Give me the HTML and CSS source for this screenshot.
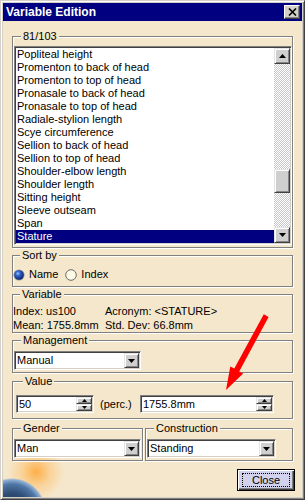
FILE: index.html
```html
<!DOCTYPE html>
<html>
<head>
<meta charset="utf-8">
<link rel="stylesheet" href="styles.css">
</head>
<body>
<div class="window">
  <div class="titlebar">
    <span class="title">Variable Edition</span>
    <span class="tb-close"><svg width="9" height="8" viewBox="0 0 9 8"><path d="M1 0.5 L8 7.5 M8 0.5 L1 7.5" stroke="#000" stroke-width="1.6"/></svg></span>
  </div>
  <div class="client">
    <fieldset class="grp grp-list">
      <legend>81/103</legend>
      <div class="listbox">
        <ul class="items">
          <li>Popliteal height</li>
          <li>Promenton to back of head</li>
          <li>Promenton to top of head</li>
          <li>Pronasale to back of head</li>
          <li>Pronasale to top of head</li>
          <li>Radiale-stylion length</li>
          <li>Scye circumference</li>
          <li>Sellion to back of head</li>
          <li>Sellion to top of head</li>
          <li>Shoulder-elbow length</li>
          <li>Shoulder length</li>
          <li>Sitting height</li>
          <li>Sleeve outseam</li>
          <li>Span</li>
          <li class="sel">Stature</li>
        </ul>
        <div class="vscroll">
          <div class="sbtn"><svg width="7" height="4" viewBox="0 0 7 4"><path d="M3.5 0 L7 4 L0 4 Z" fill="#000"/></svg></div>
          <div class="track"><div class="thumb"></div></div>
          <div class="sbtn"><svg width="7" height="4" viewBox="0 0 7 4"><path d="M0 0 L7 0 L3.5 4 Z" fill="#000"/></svg></div>
        </div>
      </div>
    </fieldset>

    <fieldset class="grp grp-sort">
      <legend>Sort by</legend>
      <div class="radios">
        <label class="radio">
          <svg width="12" height="12" viewBox="0 0 12 12">
            <defs>
              <radialGradient id="rb" cx="0.38" cy="0.35" r="0.7">
                <stop offset="0" stop-color="#9fc4ff"/>
                <stop offset="0.35" stop-color="#2f62c8"/>
                <stop offset="1" stop-color="#0a1f66"/>
              </radialGradient>
            </defs>
            <circle cx="6" cy="6" r="5.6" fill="#9a9a9a"/>
            <circle cx="6" cy="6" r="4.8" fill="url(#rb)"/>
          </svg>
          <span>Name</span>
        </label>
        <label class="radio">
          <svg width="12" height="12" viewBox="0 0 12 12">
            <circle cx="6" cy="6" r="5.3" fill="#fdfbe8" stroke="#6a6a6a" stroke-width="1"/>
          </svg>
          <span>Index</span>
        </label>
      </div>
    </fieldset>

    <fieldset class="grp grp-var">
      <legend>Variable</legend>
      <div class="vargrid">
        <span>Index: us100</span><span>Acronym: &lt;STATURE&gt;</span>
        <span>Mean: 1755.8mm</span><span>Std. Dev: 66.8mm</span>
      </div>
    </fieldset>

    <fieldset class="grp grp-mgmt">
      <legend>Management</legend>
      <div class="combo combo-mgmt">
        <span class="combo-text">Manual</span>
        <span class="combo-btn"><svg width="7" height="4" viewBox="0 0 7 4"><path d="M0 0 L7 0 L3.5 4 Z" fill="#000"/></svg></span>
      </div>
    </fieldset>

    <fieldset class="grp grp-value">
      <legend>Value</legend>
      <div class="value-row">
        <div class="spin spin-perc">
          <span class="spin-text">50</span>
          <span class="spin-btns">
            <span class="spin-btn"><svg width="7" height="4" viewBox="0 0 7 4"><path d="M3.5 0 L7 4 L0 4 Z" fill="#000"/></svg></span>
            <span class="spin-btn"><svg width="7" height="4" viewBox="0 0 7 4"><path d="M0 0 L7 0 L3.5 4 Z" fill="#000"/></svg></span>
          </span>
        </div>
        <span class="perc">(perc.)</span>
        <div class="spin spin-val">
          <span class="spin-text">1755.8mm</span>
          <span class="spin-btns">
            <span class="spin-btn"><svg width="7" height="4" viewBox="0 0 7 4"><path d="M3.5 0 L7 4 L0 4 Z" fill="#000"/></svg></span>
            <span class="spin-btn"><svg width="7" height="4" viewBox="0 0 7 4"><path d="M0 0 L7 0 L3.5 4 Z" fill="#000"/></svg></span>
          </span>
        </div>
      </div>
    </fieldset>

    <div class="row2">
      <fieldset class="grp grp-gender">
        <legend>Gender</legend>
        <div class="combo combo-gender">
          <span class="combo-text">Man</span>
          <span class="combo-btn"><svg width="7" height="4" viewBox="0 0 7 4"><path d="M0 0 L7 0 L3.5 4 Z" fill="#000"/></svg></span>
        </div>
      </fieldset>
      <fieldset class="grp grp-constr">
        <legend>Construction</legend>
        <div class="combo combo-constr">
          <span class="combo-text">Standing</span>
          <span class="combo-btn"><svg width="7" height="4" viewBox="0 0 7 4"><path d="M0 0 L7 0 L3.5 4 Z" fill="#000"/></svg></span>
        </div>
      </fieldset>
    </div>

    <div class="footer">
      <button class="close-btn"><span class="focus">Close</span></button>
    </div>

    <svg class="arrow" width="55" height="82" viewBox="223 311 55 82">
      <polygon points="263.8,314.3 268.6,316.9 239.2,371.4 243.2,373.6 226,390 230.3,366.4 234.3,368.6" fill="#ff0000"/>
    </svg>
  </div>
</div>
</body>
</html>
```

FILE: styles.css
```css
* { box-sizing: border-box; }

html, body {
  margin: 0;
  padding: 0;
}

body {
  width: 305px;
  height: 500px;
  font-family: "Liberation Sans", Arial, sans-serif;
  font-size: 11px;
  color: #000;
  background: #d4d0c8;
  overflow: hidden;
}

.window {
  width: 305px;
  height: 500px;
  display: flex;
  flex-direction: column;
  border: 1px solid;
  border-color: #d4d0c8 #404040 #404040 #d4d0c8;
  box-shadow: inset 1px 1px #ffffff, inset -1px -1px #808080;
  padding: 2px;
  background: #d4d0c8;
}

.titlebar {
  height: 18px;
  flex: none;
  display: flex;
  align-items: center;
  padding-left: 3px;
  background: #000080;
  color: #fff;
  font-weight: bold;
  font-size: 12px;
  line-height: 18px;
}

.title { flex: 1; }

.tb-close {
  width: 16px;
  height: 14px;
  margin-right: 2px;
  display: flex;
  align-items: center;
  justify-content: center;
  background: #d4d0c8;
  border: 1px solid;
  border-color: #ffffff #404040 #404040 #ffffff;
  box-shadow: inset -1px -1px #808080;
}

.client {
  flex: 1;
  position: relative;
  display: flex;
  flex-direction: column;
  background:
    radial-gradient(circle 34px at 9px 491px, #1d3352 0%, #2e4c74 55%, #4f77a6 82%, #8fb0d4 95%, rgba(245,231,203,0) 100%),
    radial-gradient(circle 28px at 33px 451px, rgba(255,165,50,0.85) 0%, rgba(255,185,90,0.45) 50%, rgba(245,231,203,0) 100%),
    #f5e7cb;
}

/* group boxes */
.grp {
  margin: 0 9px;
  padding: 0;
  min-width: 0;
  border: 1px solid #808080;
  box-shadow: inset 1px 1px #ffffff, 1px 1px #ffffff;
}

.grp legend {
  margin-left: 7px;
  padding: 0 2px;
  font-size: 11px;
  line-height: 13px;
  background: #f5e7cb;
}

.grp-list {
  margin-top: 9px;
  padding: 3px 0 2px 1px;
}

.listbox {
  height: 199px;
  display: flex;
  background: #fff;
  border: 1px solid;
  border-color: #808080 #ffffff #ffffff #808080;
  box-shadow: inset 1px 1px #404040, inset -1px -1px #d4d0c8;
  padding: 1px;
}

.items {
  flex: 1;
  list-style: none;
  margin: 0;
  padding: 0;
}

.items li {
  height: 13px;
  line-height: 13px;
  padding-left: 1px;
  white-space: nowrap;
}

.items li.sel {
  background: #000080;
  color: #fff;
}

.vscroll {
  width: 16px;
  display: flex;
  flex-direction: column;
  background: repeating-conic-gradient(#c8c8c8 0 25%, #ffffff 0 50%) 0 0 / 2px 2px;
}

.sbtn, .thumb, .combo-btn, .spin-btn {
  background: #cfcfcf;
  border: 1px solid;
  border-color: #e4e4e4 #404040 #404040 #e4e4e4;
  box-shadow: inset 1px 1px #ffffff, inset -1px -1px #868686;
}

.sbtn {
  height: 16px;
  flex: none;
  display: flex;
  align-items: center;
  justify-content: center;
}

.track { flex: 1; }

.thumb {
  margin-top: 105px;
  height: 24px;
}

/* sort by */
.grp-sort {
  margin-top: 1px;
  padding: 6px 0 5px 0;
}

.radios {
  display: flex;
  align-items: center;
  height: 13px;
  line-height: 13px;
}

.radio {
  display: flex;
  align-items: center;
  gap: 4px;
  margin-right: 7px;
}

.radio svg { display: block; }

/* variable */
.grp-var {
  margin-top: 1px;
  padding: 3px 0 0 0;
}

.vargrid {
  display: grid;
  grid-template-columns: 92px auto;
  line-height: 14px;
  white-space: nowrap;
}

/* management */
.grp-mgmt {
  margin-top: 1px;
  padding: 4px 0 2px 1px;
}

.combo {
  height: 19px;
  display: flex;
  background: #fff;
  border: 1px solid;
  border-color: #808080 #ffffff #ffffff #808080;
  box-shadow: inset 1px 1px #404040, inset -1px -1px #d4d0c8;
  padding: 1px;
}

.combo-text {
  flex: 1;
  padding-left: 1px;
  line-height: 15px;
  white-space: nowrap;
}

.combo-btn {
  width: 15px;
  display: flex;
  align-items: center;
  justify-content: center;
}

.combo-mgmt { width: 127px; }

/* value */
.grp-value {
  margin-top: 2px;
  padding: 7px 0 5px 3px;
}

.value-row {
  display: flex;
  align-items: center;
}

.spin {
  height: 18px;
  display: flex;
  background: #fff;
  border: 1px solid;
  border-color: #808080 #ffffff #ffffff #808080;
  box-shadow: inset 1px 1px #404040, inset -1px -1px #d4d0c8;
  padding: 1px;
}

.spin-text {
  flex: 1;
  line-height: 14px;
  padding-left: 1px;
}

.spin-btns {
  width: 16px;
  display: flex;
  flex-direction: column;
}

.spin-btn {
  flex: 1;
  display: flex;
  align-items: center;
  justify-content: center;
}

.spin-btn svg { width: 5px; height: 3px; }

.spin-perc { width: 78px; }

.perc {
  margin-left: 6px;
  width: 32px;
  line-height: 13px;
}

.spin-val {
  width: 134px;
  margin-left: 8px;
}

/* gender / construction */
.row2 {
  display: flex;
  gap: 2px;
  margin: 3px 9px 0;
}

.row2 .grp {
  margin: 0;
  padding: 4px 0 2px 1px;
}

.grp-gender { width: 131px; flex: none; }
.grp-constr { flex: 1; }

.combo-gender { width: 127px; }
.combo-constr { width: 129px; }

/* footer */
.footer {
  display: flex;
  justify-content: flex-end;
  margin-top: 8px;
  padding-right: 7px;
}

.close-btn {
  width: 58px;
  height: 22px;
  padding: 0;
  margin: 0;
  font-family: "Liberation Sans", Arial, sans-serif;
  font-size: 11px;
  color: #000;
  background: #d2d2ec;
  border: 1px solid #000;
  box-shadow: inset 1px 1px #ffffff, inset -1px -1px #404040, inset -2px -2px #808080;
  display: flex;
  align-items: stretch;
  justify-content: stretch;
}

.close-btn .focus {
  flex: 1;
  margin: 3px 4px;
  border: 1px dotted #000;
  display: flex;
  align-items: center;
  justify-content: center;
  line-height: 13px;
}

/* annotation arrow overlay */
.arrow {
  position: absolute;
  left: 220px;
  top: 290px;
}
```
